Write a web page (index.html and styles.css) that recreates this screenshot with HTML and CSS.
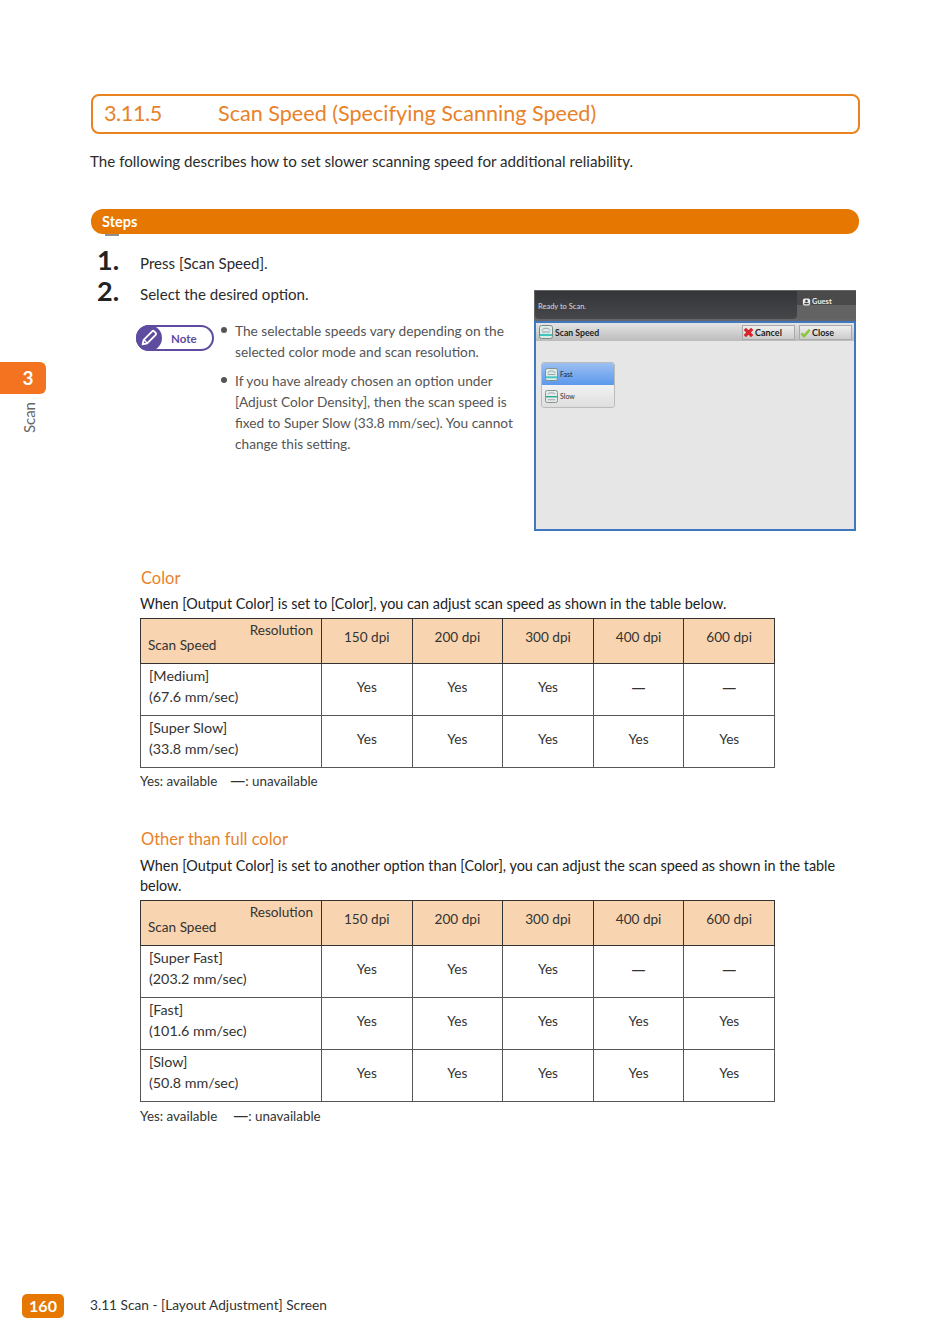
FILE: index.html
```html
<!DOCTYPE html>
<html lang="en">
<head>
<meta charset="utf-8">
<title>3.11.5 Scan Speed</title>
<link rel="stylesheet" href="styles.css">
</head>
<body>
<div class="page">
  <aside class="side">
    <div class="side-tab">3</div>
    <div class="side-label">Scan</div>
  </aside>
  <main class="content">
    <h1 class="title"><span class="title-num">3.11.5</span><span>Scan Speed (Specifying Scanning Speed)</span></h1>
    <p class="intro">The following describes how to set slower scanning speed for additional reliability.</p>
    <div class="steps-bar">Steps</div>
    <div class="clipped"></div>
    <div class="step first"><span class="step-num">1.</span><span class="step-text">Press [Scan Speed].</span></div>
    <div class="step-row">
      <div class="step-left">
        <div class="step second"><span class="step-num">2.</span><span class="step-text">Select the desired option.</span></div>
        <div class="note-row">
          <div class="note-badge">
            <span class="note-icon"><svg viewBox="0 0 24 24" width="22" height="22"><path d="M5 19l1.200-5L15.500 4.700a1.500 1.500 0 0 1 2.100 0l1.700 1.700a1.500 1.500 0 0 1 0 2.100L10 17.800z" fill="none" stroke="#fff" stroke-width="2" stroke-linejoin="round"/><path d="M6.500 14l3.500 3.500" stroke="#fff" stroke-width="1.500"/></svg></span>
            <span class="note-text">Note</span>
          </div>
          <ul class="note-list">
            <li>The selectable speeds vary depending on the selected color mode and scan resolution.</li>
            <li>If you have already chosen an option under [Adjust Color Density], then the scan speed is fixed to Super Slow (33.8 mm/sec). You cannot change this setting.</li>
          </ul>
        </div>
      </div>
      <div class="shot">
        <div class="shot-top">
          <div class="shot-status">Ready to Scan.</div>
          <div class="shot-user"><svg viewBox="0 0 10 10" width="9" height="10"><rect x="1" y="1" width="8" height="8" rx="2" fill="#eee"/><circle cx="5" cy="4" r="1.500" fill="#444"/><rect x="2.500" y="6" width="5" height="1.500" fill="#444"/></svg>Guest</div>
        </div>
        <div class="shot-panel">
          <div class="shot-head">
            <svg class="scan-ic" viewBox="0 0 14 14" width="14" height="14"><rect x=".5" y=".5" width="13" height="13" rx="2" fill="#dcebe6" stroke="#7a8a88"/><path d="M3 5.500c1-3 7-3 8 0M3 7h8" fill="none" stroke="#889" stroke-width=".8"/><rect x="1" y="9" width="12" height="2" fill="#3fc4c0"/></svg>
            <span class="shot-title">Scan Speed</span>
            <span class="shot-btn"><svg viewBox="0 0 12 12" width="11" height="11"><path d="M2 2l8 8M10 2l-8 8" stroke="#d8232a" stroke-width="3.400"/></svg>Cancel</span>
            <span class="shot-btn"><svg viewBox="0 0 12 12" width="11" height="11"><path d="M1.500 7l3 3 6-7" fill="none" stroke="#8cc63f" stroke-width="2.800"/></svg>Close</span>
          </div>
          <div class="opt-group">
            <div class="opt opt-on"><svg viewBox="0 0 14 14" width="13" height="13"><rect x=".5" y=".5" width="13" height="13" rx="2" fill="#dcebe6" stroke="#7a8a88"/><path d="M3 5.500c1-3 7-3 8 0M3 7h8" fill="none" stroke="#889" stroke-width=".8"/><rect x="1" y="9" width="12" height="2" fill="#3fc4c0"/></svg>Fast</div>
            <div class="opt"><svg viewBox="0 0 14 14" width="13" height="13"><rect x=".5" y=".5" width="13" height="13" rx="2" fill="#e6ecea" stroke="#7a8a88"/><path d="M3 4.500c1-2 7-2 8 0M3 10.500h8" fill="none" stroke="#889" stroke-width=".8"/><rect x="1" y="6.500" width="12" height="1.500" fill="#2aa98f"/></svg>Slow</div>
          </div>
        </div>
      </div>
    </div>

    <section class="sec sec-color">
      <h2 class="sec-title">Color</h2>
      <p class="sec-text">When [Output Color] is set to [Color], you can adjust scan speed as shown in the table below.</p>
      <table class="speed">
        <colgroup><col class="c0"><col class="c1"><col class="c2"><col class="c3"><col class="c4"><col class="c5"></colgroup>
        <thead><tr>
          <th class="corner"><span class="corner-res">Resolution</span><span class="corner-spd">Scan Speed</span></th>
          <th>150 dpi</th><th>200 dpi</th><th>300 dpi</th><th>400 dpi</th><th>600 dpi</th>
        </tr></thead>
        <tbody>
          <tr><td class="name">[Medium]<br>(67.6 mm/sec)</td><td>Yes</td><td>Yes</td><td>Yes</td><td class="dash">—</td><td class="dash">—</td></tr>
          <tr><td class="name">[Super Slow]<br>(33.8 mm/sec)</td><td>Yes</td><td>Yes</td><td>Yes</td><td>Yes</td><td>Yes</td></tr>
        </tbody>
      </table>
      <p class="legend"><span>Yes: available</span><span><span class="legend-dash">—</span>: unavailable</span></p>
    </section>

    <section class="sec sec-other">
      <h2 class="sec-title">Other than full color</h2>
      <p class="sec-text">When [Output Color] is set to another option than [Color], you can adjust the scan speed as shown in the table below.</p>
      <table class="speed">
        <colgroup><col class="c0"><col class="c1"><col class="c2"><col class="c3"><col class="c4"><col class="c5"></colgroup>
        <thead><tr>
          <th class="corner"><span class="corner-res">Resolution</span><span class="corner-spd">Scan Speed</span></th>
          <th>150 dpi</th><th>200 dpi</th><th>300 dpi</th><th>400 dpi</th><th>600 dpi</th>
        </tr></thead>
        <tbody>
          <tr><td class="name">[Super Fast]<br>(203.2 mm/sec)</td><td>Yes</td><td>Yes</td><td>Yes</td><td class="dash">—</td><td class="dash">—</td></tr>
          <tr><td class="name">[Fast]<br>(101.6 mm/sec)</td><td>Yes</td><td>Yes</td><td>Yes</td><td>Yes</td><td>Yes</td></tr>
          <tr><td class="name">[Slow]<br>(50.8 mm/sec)</td><td>Yes</td><td>Yes</td><td>Yes</td><td>Yes</td><td>Yes</td></tr>
        </tbody>
      </table>
      <p class="legend wide"><span>Yes: available</span><span><span class="legend-dash">—</span>: unavailable</span></p>
    </section>
  </main>
  <footer class="foot">
    <span class="page-no">160</span>
    <span class="foot-text">3.11 Scan - [Layout Adjustment] Screen</span>
  </footer>
</div>
</body>
</html>
```
FILE: styles.css
```css
* { box-sizing: border-box; }
html, body { margin: 0; padding: 0; background: #fff; }
body { font-family: Lato, "Noto Sans", sans-serif; color: #2b2b2b; font-size: 15px; }
.page { position: relative; width: 950px; height: 1344px; display: flex; flex-direction: column; padding-top: 94px; }
.content { padding-left: 90px; width: 860px; }

.side { position: absolute; left: 0; top: 362px; width: 46px; }
.side-tab { width: 46px; height: 32px; background: #f37321; border-radius: 0 6px 6px 0; color: #fff; font-weight: 700; font-size: 19px; line-height: 32px; text-align: center; padding-left: 10px; }
.side-label { writing-mode: vertical-rl; transform: rotate(180deg); margin: 8px 0 0 21px; font-size: 15px; line-height: 16px; color: #666; }

.title { margin: 0 0 0 1px; height: 40px; border: 2px solid #e88420; border-radius: 8px; display: flex; align-items: center; padding: 0 0 3px 11px; color: #e8822a; font-size: 21.600px; font-weight: 400; }
.title-num { width: 114px; letter-spacing: -.4px; }
.intro { margin: 16px 0 0; font-size: 15.150px; line-height: 22px; }
.steps-bar { margin: 37px 1px 0 1px; height: 25px; border-radius: 12px; background: #e67700; color: #fff; font-weight: 700; font-size: 14.500px; line-height: 25px; padding-left: 11px; }
.clipped { width: 14px; height: 2px; margin: 0 0 0 15px; background: #444; opacity: .6; }

.step { display: flex; align-items: flex-start; }
.step.first { margin-top: 9px; height: 30px; }
.step.second { height: 30px; margin-top: 1px; }
.step-num { width: 50px; padding-left: 7px; font-size: 27px; font-weight: 700; line-height: 30px; color: #222; }
.step-text { font-size: 15.100px; line-height: 22px; padding-top: 7px; }

.step-row { display: flex; height: 260px; }
.step-left { width: 444px; }
.note-row { display: flex; margin-top: 14px; padding-left: 46px; }
.note-badge { width: 78px; height: 26px; margin-top: 5px; border: 2px solid #5f4b9f; border-radius: 13px; display: flex; align-items: center; flex: none; }
.note-icon { width: 26px; height: 26px; margin-left: -2px; background: #5f4b9f; border-radius: 13px; display: flex; align-items: center; justify-content: center; flex: none; }
.note-text { margin-left: 9px; color: #5f4b9f; font-weight: 700; font-size: 11.500px; }
.note-list { list-style: none; margin: 0 0 0 21px; padding: 0; width: 284px; color: #555; font-size: 13.700px; line-height: 21px; }
.note-list li { position: relative; margin-bottom: 8px; }
.note-list li::before { content: ""; position: absolute; left: -14px; top: 7px; width: 6px; height: 6px; border-radius: 50%; background: #555; }

.shot { width: 322px; height: 241px; margin-top: 15px; display: flex; flex-direction: column; background: #e6e6e6; flex: none; }
.shot-top { height: 31px; display: flex; background: #666; padding: 1px 0 0 1px; }
.shot-status { flex: 1; background: linear-gradient(#333538, #45474a); border-radius: 0 0 4px 4px; color: #ddd; font-size: 7.500px; line-height: 32px; padding-left: 3px; height: 28px; }
.shot-user { width: 59px; height: 28px; color: #eee; font-size: 7.500px; font-weight: 700; background: linear-gradient(#4a4a4a 50%, #636363 50%); padding: 6px 0 0 5px; display: flex; align-items: flex-start; gap: 1px; }
.shot-panel { flex: 1; border: 2px solid #3f78c0; }
.shot-head { height: 18px; display: flex; align-items: center; background: linear-gradient(#e4e4e4, #bcbcbc); padding-left: 3px; gap: 2px; }
.shot-title { flex: 1; font-size: 8.700px; font-weight: 700; color: #222; }
.shot-btn { width: 53px; height: 15px; margin-right: 2px; border: 1px solid #aaa; background: linear-gradient(#eee, #ccc); font-size: 9px; font-weight: 700; display: flex; align-items: center; gap: 1px; color: #222; }
.opt-group { width: 74px; margin: 21px 0 0 5px; border: 1px solid #bbb; border-radius: 3px; overflow: hidden; }
.opt { height: 22px; background: linear-gradient(#f2f2f2, #dedede); display: flex; align-items: center; gap: 2px; padding-left: 3px; font-size: 7px; color: #333; }
.opt-on { background: linear-gradient(#9cc0f2, #5c98ec); color: #123; }

.sec-title { margin: 0 0 0 1px; font-size: 16.500px; line-height: 22px; font-weight: 400; color: #e8822a; }
.sec { padding-left: 50px; }
.sec-color { margin-top: 32px; }
.sec-other { margin-top: 37px; }
.sec-other .sec-text { margin-top: 6px; }
.sec-text { margin: 5px 0 4px; font-size: 14.400px; line-height: 20px; color: #222; width: 710px; }
.speed { border-collapse: collapse; table-layout: fixed; width: 634px; font-size: 13.600px; color: #333; }
.c0 { width: 181px; } .c1, .c2, .c3, .c4, .c5 { width: 90.600px; }
.speed th, .speed td { border: 1px solid #333; text-align: center; font-weight: 400; padding: 0; }
.speed td { border-color: #555; height: 52px; line-height: 21px; padding-bottom: 4px; }
.speed th { background: #f8d5b0; height: 45px; padding-bottom: 8px; }
.speed .corner { text-align: left; padding: 0 0 8px; }
.corner-res, .corner-spd { display: block; line-height: 20px; }
.corner-res { text-align: right; padding-right: 8px; }
.corner-spd { padding-left: 7px; margin-top: -5px; }
.speed .name { text-align: left; padding: 0 0 7px 8px; font-size: 14.300px; }
.speed .dash { font-family: "Noto Sans", sans-serif; font-size: 14px; }
.legend { margin: 3px 0 0; height: 20px; font-size: 13.400px; line-height: 20px; display: flex; align-items: baseline; gap: 13px; color: #333; }
.legend-dash { font-family: "Noto Sans", sans-serif; font-size: 15px; line-height: 1; }
.legend.wide { gap: 16px; margin-top: 4px; }

.foot { position: absolute; left: 22px; top: 1294px; display: flex; align-items: center; }
.page-no { width: 42px; height: 24px; border-radius: 5px; background: #e67700; color: #fff; font-weight: 700; font-size: 16px; line-height: 23px; text-align: center; }
.foot-text { margin: 0 0 4px 26px; font-size: 13.700px; color: #333; }
```
